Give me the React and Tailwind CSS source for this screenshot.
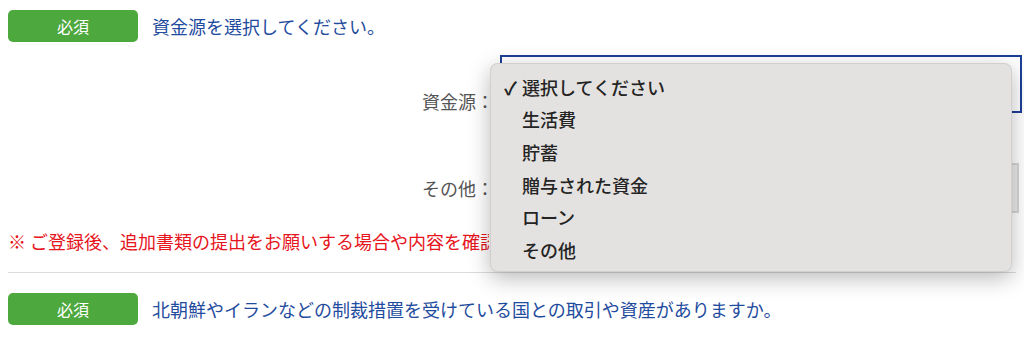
import React from "react";

const font = { fontFamily: '"Noto Sans CJK JP", "Noto Sans", sans-serif' };

function Badge() {
  return (
    <div className="w-[130px] h-[32px] rounded-[5px] bg-[#4da83e] text-white text-[16px] flex items-center justify-center shrink-0">
      必須
    </div>
  );
}

export default function App() {
  const items = ["選択してください", "生活費", "貯蓄", "贈与された資金", "ローン", "その他"];
  return (
    <div className="relative w-[1024px] h-[340px] bg-white overflow-hidden" style={font}>
      <div className="pl-2 pt-[10px]">
        <div className="flex items-center gap-[14px]">
          <Badge />
          <div className="text-[18px] text-[#1f4c9e] leading-none">資金源を選択してください。</div>
        </div>

        <div className="flex items-start mt-[13px]">
          <div className="w-[492px] text-right pr-[6px] pt-[33px] text-[18px] leading-[26px] text-[#555]">資金源：</div>
          <div className="w-[522px] h-[58px] border-2 border-[#1c3f97] bg-white"></div>
        </div>

        <div className="flex items-center mt-[49px]">
          <div className="w-[492px] text-right pr-[6px] text-[18px] leading-[26px] text-[#555]">その他：</div>
          <div className="w-[519px] h-[50px] border-2 border-[#d6d6d6] bg-[#ebebeb]"></div>
        </div>

        <div className="mt-[15px] w-[481px] overflow-hidden text-[18px] leading-[26px] text-[#e6141c] whitespace-nowrap">
          ※ ご登録後、追加書類の提出をお願いする場合や内容を確認させていただく場合がございます。
        </div>

        <div className="mt-[18px] w-[1008px] h-px bg-[#dcdcdc]"></div>

        <div className="flex items-center gap-[14px] mt-[20px]">
          <Badge />
          <div className="text-[18px] text-[#1f4c9e] leading-none">北朝鮮やイランなどの制裁措置を受けている国との取引や資産がありますか。</div>
        </div>
      </div>

      <div className="absolute left-[490px] top-[63px] w-[522px] h-[209px] rounded-[8px] bg-[#e4e2e0] border border-[rgba(0,0,0,0.08)] shadow-[0_6px_22px_rgba(0,0,0,0.28)] py-[7px]">
        {items.map((t, i) => (
          <div key={t} className="h-[32.6px] flex items-center text-[18px] font-medium text-[#242424]">
            <span className="w-[31px] pl-[13px] text-[18px] font-bold">{i === 0 ? "✓" : ""}</span>
            <span>{t}</span>
          </div>
        ))}
      </div>
    </div>
  );
}
